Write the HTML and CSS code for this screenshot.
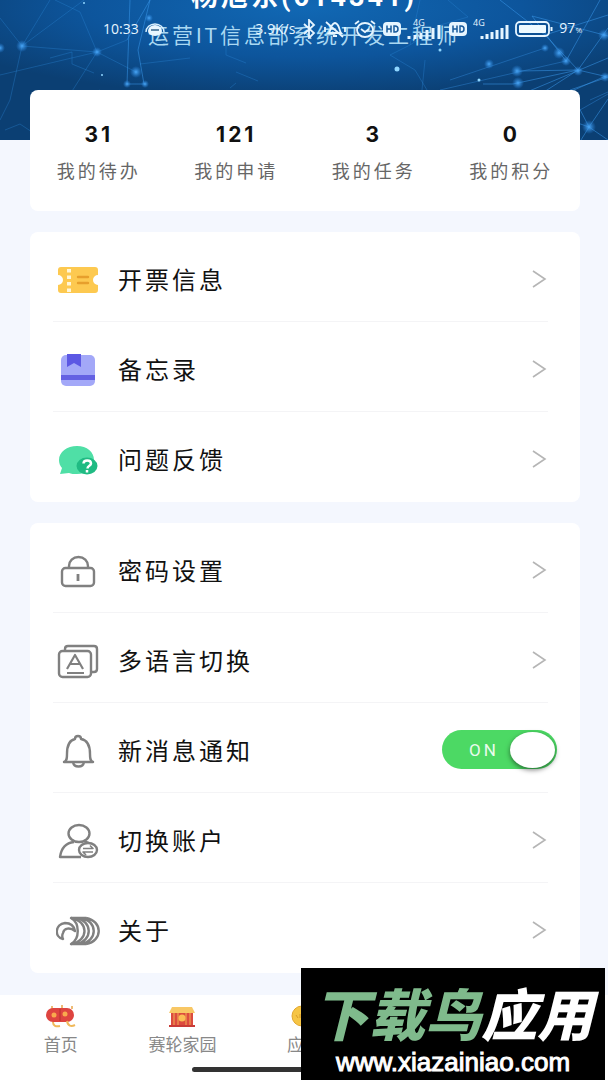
FILE: index.html
```
<!DOCTYPE html>
<html lang="zh-CN">

<head>
  <meta charset="UTF-8">
  <meta name="viewport" content="width=device-width, initial-scale=1.0">
  <title>我的</title>
  <link rel="stylesheet" href="styles.css">
</head>

<body>
  <!-- 状态栏 -->
  <div class="status">
    <div class="status-left">
      <span>10:33</span>
      <svg width="20" height="14" viewBox="0 0 20 14">
        <path d="M1 10A9 8 0 0 1 19 10" fill="none" stroke="#d8f0ff" stroke-width="1.4" />
        <path d="M3 9A7 6 0 0 1 17 9A7 5 0 0 1 3 9Z" fill="#e8f6ff" />
        <path d="M6 8h8" stroke="#5f87a8" stroke-width="2" />
      </svg>
    </div>
    <div class="status-right">
      <span class="speed">3.9K/s</span>
      <svg width="16" height="20" viewBox="0 0 16 20" fill="none" stroke="#e6f5ff" stroke-width="1.8">
        <path d="M3 5l10 9-5 5V1l5 5-10 9" />
      </svg>
      <svg width="24" height="20" viewBox="0 0 24 20" fill="none" stroke="#e6f5ff" stroke-width="1.8">
        <path d="M6 14c2-2 1-9 6-10 5 1 4 8 6 10H6zM10 17h4M3 3l17 15M2 8v5M22 8v5" />
      </svg>
      <svg width="24" height="20" viewBox="0 0 24 20" fill="none" stroke="#e6f5ff" stroke-width="1.8">
        <ellipse cx="12" cy="11" rx="8" ry="7" />
        <path d="M2 5l4-3M22 5l-4-3M8 10l4 3 4-3" />
      </svg>
      <svg width="18" height="20" viewBox="0 0 18 20">
        <rect y="3" width="18" height="14" rx="4" fill="#e6f5ff" />
        <path d="M4 6.500v7M8 6.500v7M4 10h4M11 7v6h1a3 3 0 0 0 0-6z" fill="none" stroke="#17599b" stroke-width="1.500" />
      </svg>
      <svg class="signal" width="36" height="24" viewBox="0 0 36 24">
        <text x="6" y="9">4G</text>
        <path d="M2 22v-3M8 22v-4M14 22v-6M20 22v-9M26 22V11M32 22V8" />
      </svg>
      <svg width="18" height="20" viewBox="0 0 18 20">
        <rect y="3" width="18" height="14" rx="4" fill="#e6f5ff" />
        <path d="M4 6.500v7M8 6.500v7M4 10h4M11 7v6h1a3 3 0 0 0 0-6z" fill="none" stroke="#17599b" stroke-width="1.500" />
      </svg>
      <svg class="signal" width="36" height="24" viewBox="0 0 36 24">
        <text x="0" y="9">4G</text>
        <path d="M9 22v-3M14 22v-5M19 22v-7M24 22v-9M29 22V11M34 22V8" />
      </svg>
      <svg width="38" height="20" viewBox="0 0 38 20">
        <rect x="1" y="3" width="33" height="14" rx="4" fill="none" stroke="#e6f5ff" stroke-width="1.800" />
        <rect x="4" y="6" width="27" height="8" rx="1" fill="#eefaff" />
        <path d="M36.500 8v4" stroke="#e6f5ff" stroke-width="2" />
      </svg>
      <span>97<small>%</small></span>
    </div>
  </div>

  <!-- 头部 -->
  <header class="header">
    <svg class="header-bg" viewBox="0 0 608 140" preserveAspectRatio="xMidYMid slice">
      <defs>
        <radialGradient id="sky" cx=".5" cy="0.050" r=".65">
          <stop offset="0" stop-color="#1168b4" />
          <stop offset=".55" stop-color="#0d559c" />
          <stop offset="1" stop-color="#0b3f73" />
        </radialGradient>
        <radialGradient id="glow">
          <stop offset="0" stop-color="#4aa6f5" />
          <stop offset="1" stop-color="#2a86e0" stop-opacity="0" />
        </radialGradient>
      </defs>
      <rect width="608" height="140" fill="url(#sky)" />
      <g fill="none" stroke="#2c86d8" stroke-opacity=".35">
        <path d="M0 18L22 46 84 0M22 46L50 0M22 46L97 52 127 40 M97 52L80 12 55 0M97 52L60 110M22 46L10 100 0 120M0 75L97 52M97 52L136 72M60 110l40-20M5 130l15-6 12 8" />
        <path d="M50 58l22-6v12l22 9M140 64l50-6M226 45v10l20 8M236 72l22 9M230 88l6-5" />
        <path d="M420 0l-10 45-20 10 25 15 15 25M410 45l30-20 28-8-20-17M425 60l-4 40-15 40" />
      </g>
      <g fill="none" stroke="#3b9cf0" stroke-opacity=".5">
        <path d="M130 0l-3 84M150 0l-23 40M150 0l-12 50 6 34M127 84h18" />
        <path d="M608 58L460 120M608 75L470 136M578 70L608 28M578 70l30 7M578 70l-65 14-30 0M518 71L578 70M545 35l33 35M545 35l63-20M545 35L500 0M566 61l-34-45 76 20M600 0l-34 61M578 70l-62 40M589 127l19-28M589 127l19 13M589 127L570 90 608 77M589 127l-20-7M589 127l-8 13" />
        <path d="M590 100l18-8M580 110l28-16M566 61L440 90M545 48L450 80" stroke-opacity=".35" />
      </g>
      <g fill="url(#glow)">
        <circle cx="22" cy="46" r="6" />
        <circle cx="97" cy="52" r="5" />
        <circle cx="136" cy="72" r="6" />
        <circle cx="127" cy="84" r="4" />
        <circle cx="145" cy="84" r="4" />
        <circle cx="149" cy="18" r="4" />
        <circle cx="0" cy="48" r="5" />
        <circle cx="517" cy="71" r="6" />
        <circle cx="518" cy="83" r="6" />
        <circle cx="559" cy="53" r="6" />
        <circle cx="566" cy="61" r="5" />
        <circle cx="545" cy="48" r="4" />
        <circle cx="578" cy="71" r="5" />
        <circle cx="605" cy="77" r="5" />
        <circle cx="589" cy="127" r="7" />
        <circle cx="604" cy="35" r="6" />
        <circle cx="489" cy="64" r="5" />
      </g>
      <g fill="#8fd6ff">
        <circle cx="397" cy="69" r="2.500" />
        <circle cx="479" cy="80" r="1.500" />
        <circle cx="440" cy="50" r="1.500" />
        <circle cx="102" cy="75" r="1" />
        <circle cx="84" cy="3" r="1" />
      </g>
    </svg>
    <h1 class="name">杨旭东(614341)</h1>
    <p class="job">运营IT信息部系统开发工程师</p>
  </header>

  <main class="main">
    <!-- 统计 -->
    <section class="card stats">
      <a href="#"><strong>31</strong><span>我的待办</span></a>
      <a href="#"><strong>121</strong><span>我的申请</span></a>
      <a href="#"><strong>3</strong><span>我的任务</span></a>
      <a href="#"><strong>0</strong><span>我的积分</span></a>
    </section>

    <section class="card">
      <a class="row" href="#">
        <svg class="icon" viewBox="0 0 44 40">
          <path d="M5 7h34q3 0 3 3v5a5 5 0 0 0 0 10v5q0 3-3 3H5q-3 0-3-3v-5a5 5 0 0 0 0-10v-5q0-3 3-3z" fill="#fdc950" />
          <path d="M13 9v24" stroke="#fff6d8" stroke-width="4" stroke-dasharray="3.500 3" />
          <path d="M22 17h10M22 23h10" stroke="#e79f2c" stroke-width="2.400" stroke-linecap="round" />
        </svg>
        <span class="label">开票信息</span>
        <svg class="arrow" viewBox="0 0 36 20"><path d="M12 1l12 8-12 8" /></svg>
      </a>
      <a class="row" href="#">
        <svg class="icon" viewBox="0 0 44 40">
          <rect x="5" y="5" width="34" height="31" rx="5" fill="#a3a8f8" />
          <path d="M5 25h34v5H5z" fill="#6461e3" />
          <path d="M11 4h14v13l-7-4-7 4z" fill="#5c58e4" />
        </svg>
        <span class="label">备忘录</span>
        <svg class="arrow" viewBox="0 0 36 20"><path d="M12 1l12 8-12 8" /></svg>
      </a>
      <a class="row" href="#">
        <svg class="icon" viewBox="0 0 44 40">
          <path d="M21 6c10 0 17 6 17 14s-7 14-17 14c-3 0-6 0-8-1l-9 1 2-6c-2-2-3-5-3-8C3 12 11 6 21 6z" fill="#4fdfa6" />
          <ellipse cx="31" cy="26" rx="10.500" ry="8.500" fill="#20bb83" />
          <path d="M27.500 23.500c0-4 7.500-4 7.500 0 0 2.500-3.500 2-3.500 5M31 30v2.500" fill="none" stroke="#fff" stroke-width="2.500" />
        </svg>
        <span class="label">问题反馈</span>
        <svg class="arrow" viewBox="0 0 36 20"><path d="M12 1l12 8-12 8" /></svg>
      </a>
    </section>

    <section class="card">
      <a class="row" href="#">
        <svg class="icon line" viewBox="0 0 44 40">
          <rect x="6" y="17" width="32" height="18" rx="3.500" />
          <path d="M13 17v-2c0-5 4-9 9.500-9s9.500 4 9.500 9v2" />
          <path d="M22 23v7" stroke-width="2.800" />
        </svg>
        <span class="label">密码设置</span>
        <svg class="arrow" viewBox="0 0 36 20"><path d="M12 1l12 8-12 8" /></svg>
      </a>
      <a class="row" href="#">
        <svg class="icon line" viewBox="0 0 44 40">
          <rect x="3" y="10" width="32" height="26" rx="3.500" />
          <path d="M9 10V8q0-3 3-3h26q3 0 3 3v20q0 3-3 3h-3" />
          <path d="M11 28l8-14 8 14M14 23h10M11 32h17" stroke-width="2.200" />
        </svg>
        <span class="label">多语言切换</span>
        <svg class="arrow" viewBox="0 0 36 20"><path d="M12 1l12 8-12 8" /></svg>
      </a>
      <div class="row">
        <svg class="icon line" viewBox="0 0 44 40">
          <path d="M8 31c3-1 3-4 3-8 0-9 3-14 8-15 0-4 6-4 6 0 6 1 9 6 9 15 0 4 0 7 3 8z" />
          <path d="M17 31c1 6 10 6 11 0" />
        </svg>
        <label class="label" for="notice">新消息通知</label>
        <span class="switch">
          <input type="checkbox" id="notice" checked>
          <span class="switch-text">ON</span>
        </span>
      </div>
      <a class="row" href="#">
        <svg class="icon line" viewBox="0 0 44 40">
          <ellipse cx="23" cy="12.500" rx="10.500" ry="8.500" />
          <path d="M18 21C9 22 5 29 4 36h21M28 20l5 2" />
          <ellipse cx="32" cy="29" rx="9" ry="7" />
          <path d="M27 27.500h10l-3-3M37 31H27l3 3" stroke-width="1.600" />
        </svg>
        <span class="label">切换账户</span>
        <svg class="arrow" viewBox="0 0 36 20"><path d="M12 1l12 8-12 8" /></svg>
      </a>
      <a class="row" href="#">
        <svg class="icon line" viewBox="0 0 44 40">
          <path d="M7 28C-2 26-1 13 9 12c6 0 9 3 10 8-5-4-11-3-12 2-1 2-1 4 0 6z" />
          <path d="M15 7c18 3 18 23 0 26 9-5 9-21 0-26z" />
          <path d="M20 7c17 3 17 23 0 26M25 7c17 3 17 23 0 26M30 7c17 3 17 23 0 26M15 7h15M15 33h15" />
        </svg>
        <span class="label">关于</span>
        <svg class="arrow" viewBox="0 0 36 20"><path d="M12 1l12 8-12 8" /></svg>
      </a>
    </section>
  </main>

  <!-- 底部导航 -->
  <nav class="tabbar">
    <a href="#">
      <svg width="32" height="24" viewBox="0 0 32 24">
        <path d="M7 4V1M17 4V0M27 4V1" stroke="#e9a64a" stroke-width="1.500" />
        <rect x="1" y="3" width="28" height="14" rx="7" fill="#de4440" />
        <path d="M15 4v12" stroke="#b8302f" />
        <path d="M8 17c0 4 3 5 7 4M22 16c1 5 4 6 8 4" fill="none" stroke="#f0b95a" stroke-width="2" />
        <circle cx="9" cy="10" r="2.500" fill="#f9a94d" />
        <circle cx="20" cy="9" r="2.500" fill="#f9a94d" />
      </svg>
      <span>首页</span>
    </a>
    <a href="#">
      <svg width="32" height="24" viewBox="0 0 32 24">
        <path d="M6 2h20l3 6H3z" fill="#f8c765" />
        <path d="M5 8h22v13H5z" fill="#dc4b3f" />
        <path d="M3 20h26v2H3z" fill="#c93b37" />
        <path d="M8 8v12M24 8v12M12 8v12M20 8v12" stroke="#f2ae55" />
        <circle cx="16" cy="13" r="3.500" fill="#fbbd55" />
      </svg>
      <span>赛轮家园</span>
    </a>
    <a href="#">
      <svg width="32" height="24" viewBox="0 0 32 24">
        <circle cx="14" cy="11" r="10" fill="#f6c544" stroke="#e3a72f" />
        <path d="M8 10l2 3M12 9v4" stroke="#d99a28" />
      </svg>
      <span>应用</span>
    </a>
  </nav>
  <div class="home-line"></div>

  <aside class="badge">
    <p class="badge-title"><b>下载鸟</b>应用</p>
    <p class="badge-url">www.xiazainiao.com</p>
  </aside>
</body>

</html>
```
FILE: styles.css
```
* {
  box-sizing: border-box;
  margin: 0;
  padding: 0;
}

body {
  min-height: 100vh;
  display: flex;
  flex-direction: column;
  background-color: #f4f7fe;
  color: #111;
  font-family: Roboto, "Noto Sans CJK SC", sans-serif;
  letter-spacing: 3px;
}

a {
  color: inherit;
  text-decoration: none;
}

svg {
  display: block;
  flex: none;
}

/* 状态栏 */
.status {
  position: absolute;
  top: 16px;
  left: 0;
  right: 0;
  z-index: 2;
  display: flex;
  justify-content: space-between;
  padding: 0 26px 0 103px;
  color: #e6f5ff;
  font-family: "Open Sans", sans-serif;
  font-size: 14px;
  line-height: 24px;
  letter-spacing: 0;
}

.status-left,
.status-right {
  display: flex;
  align-items: center;
  gap: 6px;
}

.status small {
  font-size: 8px;
}

.signal text {
  fill: #e6f5ff;
  font-size: 9px;
}

.signal path {
  stroke: #e6f5ff;
  stroke-width: 3;
}

/* 头部 */
.header {
  position: relative;
  height: 140px;
  display: flex;
  flex-direction: column;
  justify-content: flex-end;
  align-items: center;
  padding-bottom: 91px;
  overflow: hidden;
}

.header-bg {
  position: absolute;
  top: 0;
  left: 0;
  width: 100%;
  height: 100%;
}

.name {
  position: relative;
  flex: none;
  margin-bottom: 8px;
  color: #fff;
  font-size: 27px;
  font-weight: 700;
  line-height: 36px;
}

.job {
  position: relative;
  flex: none;
  color: #a9d8f2;
  font-size: 21px;
  line-height: 26px;
}

/* 内容 */
.main {
  position: relative;
  display: flex;
  flex-direction: column;
  gap: 21px;
  margin-top: -50px;
  padding: 0 28px 22px 30px;
}

.card {
  background-color: #fff;
  border-radius: 8px;
}

.stats {
  display: grid;
  grid-template-columns: repeat(4, 1fr);
  padding: 31px 0 27px;
}

.stats a {
  display: flex;
  flex-direction: column;
  align-items: center;
  gap: 11px;
}

.stats strong {
  font-family: Inter, sans-serif;
  font-size: 21px;
  line-height: 28px;
}

.stats span {
  color: #666;
  font-size: 18px;
  line-height: 24px;
}

.row {
  display: flex;
  align-items: center;
  height: 90px;
  margin: 0 23px;
  padding-top: 6px;
  background: linear-gradient(#f4f4f6, #f4f4f6) left bottom / calc(100% - 9px) 1px no-repeat;
}

.row:last-child {
  background: none;
}

.icon {
  width: 44px;
  height: 40px;
  margin: 0 18px 0 3px;
}

.line {
  fill: none;
  stroke: #808080;
  stroke-width: 2.4;
  stroke-linejoin: round;
}

.label {
  flex: 1;
  padding-top: 2px;
  font-size: 24px;
  line-height: 32px;
}

.arrow {
  width: 36px;
  height: 20px;
  fill: none;
  stroke: #b5b5b5;
  stroke-width: 1.6;
}

/* 开关 */
.switch {
  display: grid;
  grid-template-columns: 115px;
  align-items: center;
  padding-bottom: 3px;
}

.switch input {
  grid-area: 1 / 1;
  display: flex;
  justify-content: flex-end;
  align-items: center;
  width: 115px;
  height: 39px;
  padding: 2px;
  appearance: none;
  background-color: #4cd964;
  border-radius: 20px;
}

.switch input::after {
  content: "";
  width: 45px;
  height: 36px;
  background-color: #fff;
  border-radius: 50%;
  box-shadow: 0 2px 5px rgba(0, 0, 0, 0.5);
}

.switch-text {
  grid-area: 1 / 1;
  padding-left: 27px;
  color: #e9fbec;
  font-size: 17px;
  pointer-events: none;
}

/* 底部导航 */
.tabbar {
  flex: 1;
  display: grid;
  grid-template-columns: repeat(5, 1fr);
  align-items: start;
  min-height: 84px;
  padding-top: 10px;
  background-color: #fff;
  color: #888;
  font-size: 17px;
  line-height: 24px;
  letter-spacing: 0;
}

.tabbar a {
  display: flex;
  flex-direction: column;
  align-items: center;
  gap: 4px;
}

.home-line {
  position: fixed;
  bottom: 8px;
  left: 50%;
  width: 224px;
  height: 5px;
  margin-left: -112px;
  background-color: #333;
  border-radius: 3px;
}

/* 右下角标识 */
.badge {
  position: fixed;
  right: 3px;
  bottom: 0;
  width: 304px;
  height: 112px;
  padding-top: 14px;
  background-color: #000;
  color: #fff;
  text-align: center;
  letter-spacing: 0;
  white-space: nowrap;
}

.badge-title {
  margin-bottom: 4px;
  font-family: "Noto Sans CJK SC", sans-serif;
  font-size: 56px;
  font-style: italic;
  font-weight: 900;
  line-height: 60px;
}

.badge-title b {
  color: #7fba8c;
  font-weight: 900;
}

.badge-url {
  font-family: "Liberation Sans", sans-serif;
  font-size: 26px;
  line-height: 32px;
  -webkit-text-stroke: 1px #fff;
}
```
